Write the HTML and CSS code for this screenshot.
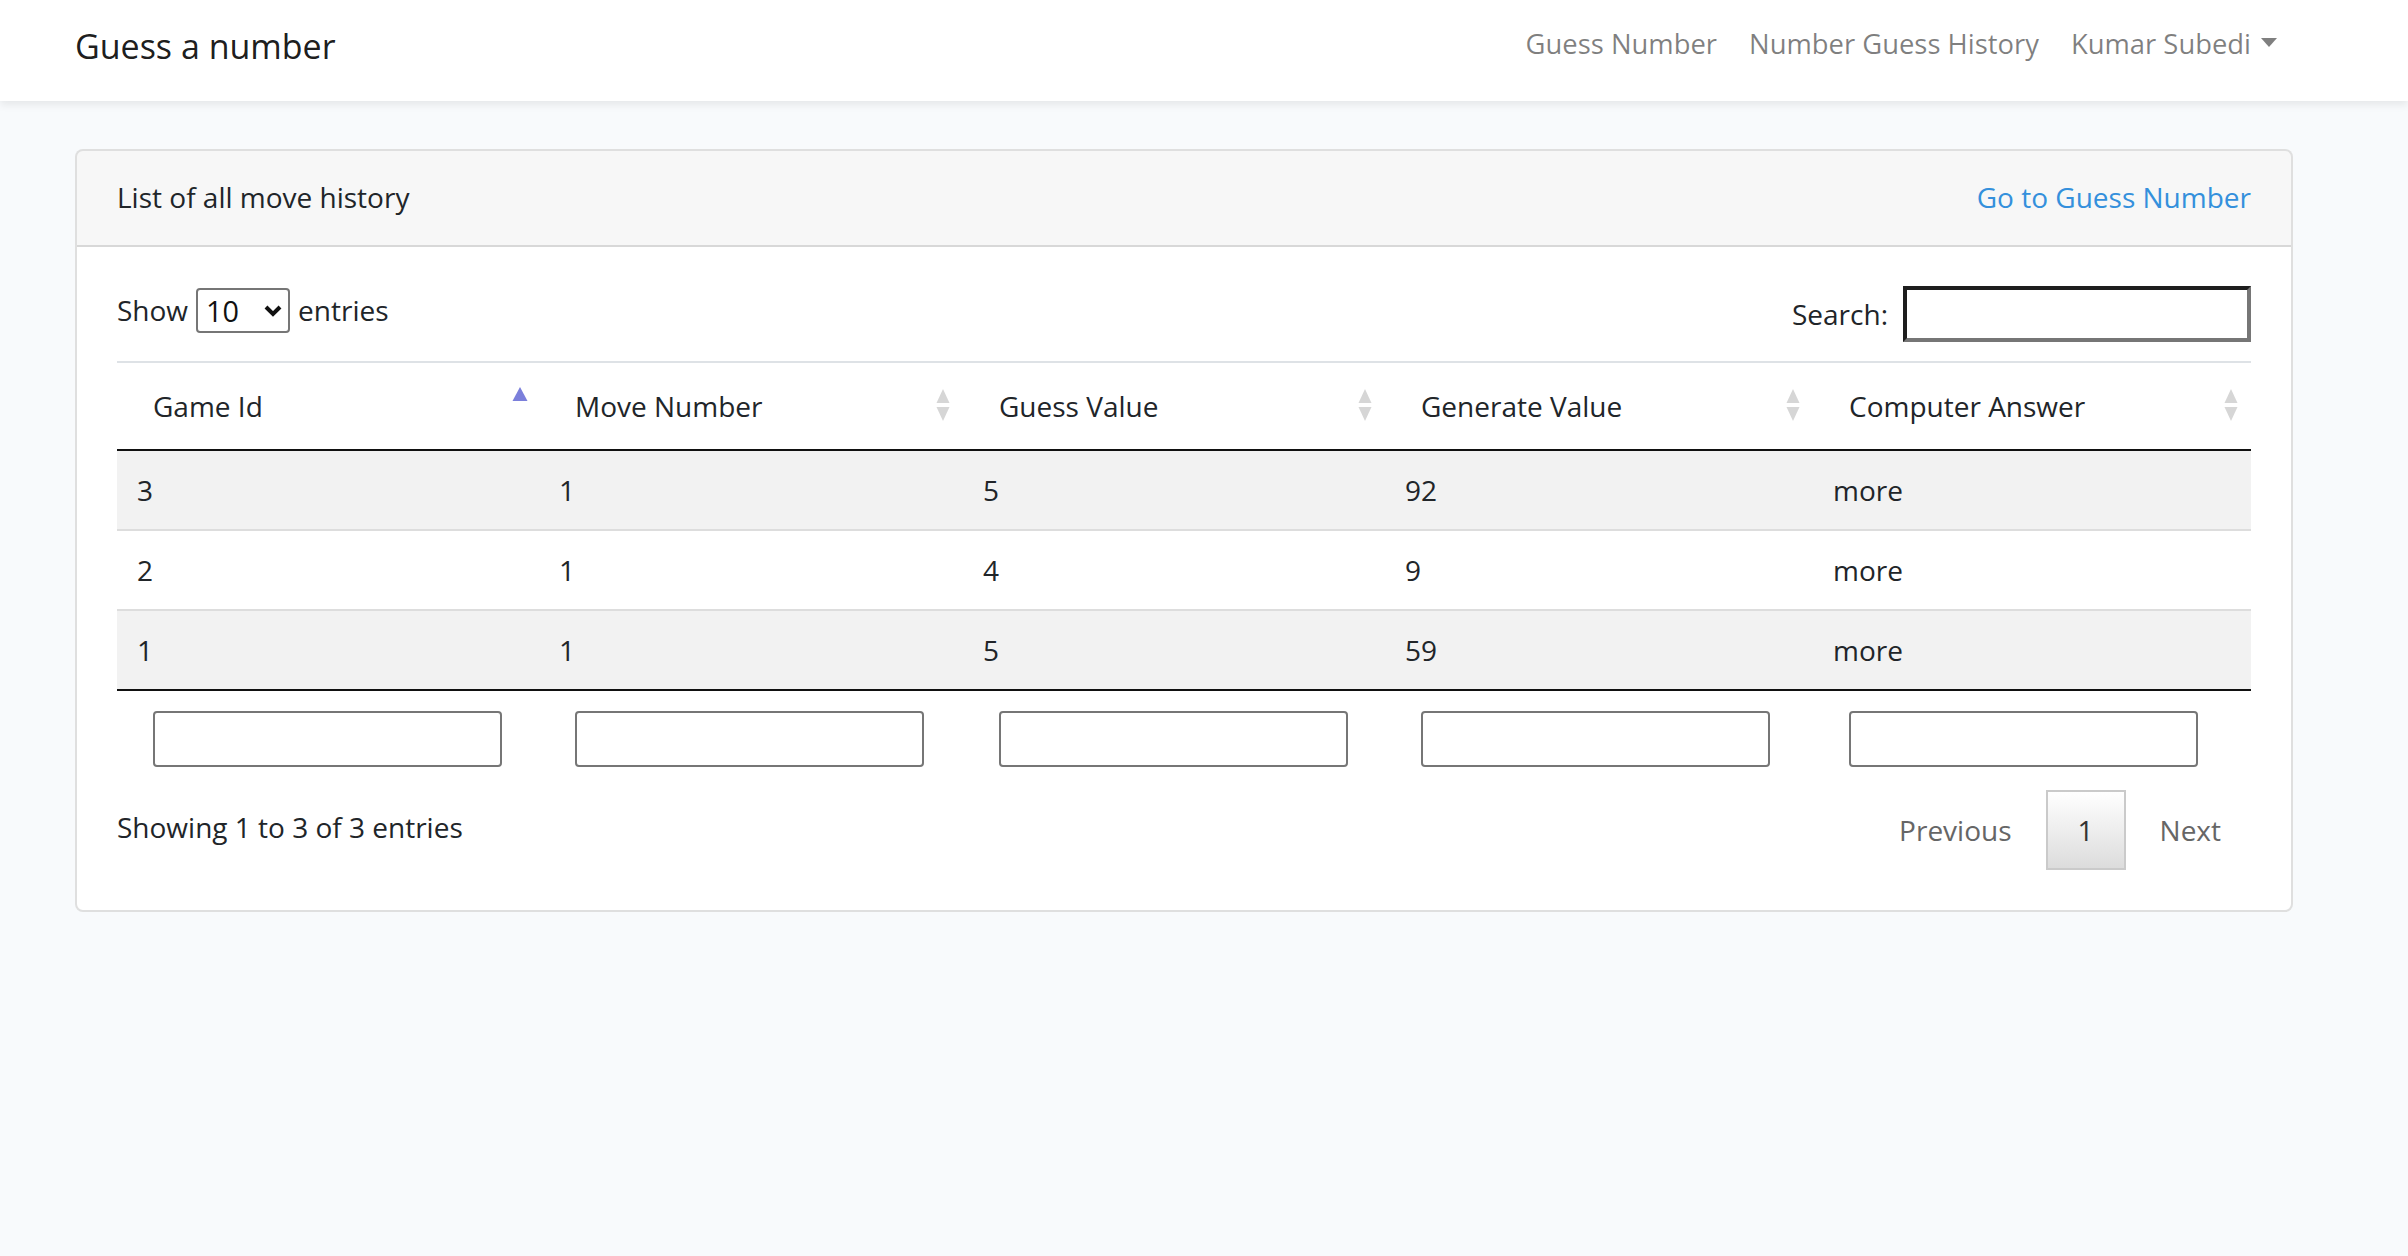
FILE: index.html
```html
<!DOCTYPE html>
<html lang="en">
<head>
<meta charset="utf-8">
<title>Guess a number</title>
<link rel="stylesheet" href="styles.css">
</head>
<body>
<nav class="navbar">
  <a class="brand" href="#">Guess a number</a>
  <ul class="nav">
    <li><a class="nav-link" href="#">Guess Number</a></li>
    <li><a class="nav-link" href="#">Number Guess History</a></li>
    <li><a class="nav-link dropdown-toggle" href="#">Kumar Subedi</a></li>
  </ul>
</nav>

<main class="main">
  <div class="card">
    <div class="card-header">
      <span>List of all move history</span>
      <a class="link" href="#">Go to Guess Number</a>
    </div>
    <div class="card-body">
      <div class="dt-top">
        <label class="dt-length">Show
          <span class="select-wrap">
            <select class="dt-select">
              <option>10</option>
              <option>25</option>
              <option>50</option>
              <option>100</option>
            </select>
            <svg class="chev" width="18" height="12" viewBox="0 0 18 12"><path d="M2 2 L9 9 L16 2" fill="none" stroke="#111" stroke-width="4"/></svg>
          </span>
          entries</label>
        <label class="dt-filter">Search:<input class="search-input" type="search"></label>
      </div>

      <table class="dt-table">
        <colgroup>
          <col class="c1"><col class="c2"><col class="c3"><col class="c4"><col class="c5">
        </colgroup>
        <thead>
          <tr>
            <th>Game Id
              <svg class="sort asc" width="18" height="32" viewBox="0 0 18 32"><polygon points="9,1 16.5,15 1.5,15" fill="#7b7fdb"/></svg>
            </th>
            <th>Move Number
              <svg class="sort" width="16" height="32" viewBox="0 0 16 32"><polygon points="8,0 14.5,14 1.5,14" fill="#d6d6d6"/><polygon points="1.5,18 14.5,18 8,32" fill="#d6d6d6"/></svg>
            </th>
            <th>Guess Value
              <svg class="sort" width="16" height="32" viewBox="0 0 16 32"><polygon points="8,0 14.5,14 1.5,14" fill="#d6d6d6"/><polygon points="1.5,18 14.5,18 8,32" fill="#d6d6d6"/></svg>
            </th>
            <th>Generate Value
              <svg class="sort" width="16" height="32" viewBox="0 0 16 32"><polygon points="8,0 14.5,14 1.5,14" fill="#d6d6d6"/><polygon points="1.5,18 14.5,18 8,32" fill="#d6d6d6"/></svg>
            </th>
            <th>Computer Answer
              <svg class="sort" width="16" height="32" viewBox="0 0 16 32"><polygon points="8,0 14.5,14 1.5,14" fill="#d6d6d6"/><polygon points="1.5,18 14.5,18 8,32" fill="#d6d6d6"/></svg>
            </th>
          </tr>
        </thead>
        <tbody>
          <tr class="odd"><td>3</td><td>1</td><td>5</td><td>92</td><td>more</td></tr>
          <tr class="even"><td>2</td><td>1</td><td>4</td><td>9</td><td>more</td></tr>
          <tr class="odd"><td>1</td><td>1</td><td>5</td><td>59</td><td>more</td></tr>
        </tbody>
        <tfoot>
          <tr>
            <th><input class="col-input" type="text"></th>
            <th><input class="col-input" type="text"></th>
            <th><input class="col-input" type="text"></th>
            <th><input class="col-input" type="text"></th>
            <th><input class="col-input" type="text"></th>
          </tr>
        </tfoot>
      </table>

      <div class="dt-bottom">
        <div class="dt-info">Showing 1 to 3 of 3 entries</div>
        <div class="dt-paginate">
          <a class="page-btn disabled" href="#">Previous</a>
          <a class="page-btn current" href="#">1</a>
          <a class="page-btn disabled" href="#">Next</a>
        </div>
      </div>
    </div>
  </div>
</main>
</body>
</html>
```

FILE: styles.css
```css
* { box-sizing: border-box; }

html, body {
  margin: 0;
  padding: 0;
}

body {
  background: #f8fafc;
  color: #212529;
  font-family: "Open Sans", "Liberation Sans", sans-serif;
  font-size: 28px;
  line-height: 46px;
  width: 2408px;
  height: 1256px;
}

a { text-decoration: none; }

/* Navbar */
.navbar {
  height: 101px;
  background: #fff;
  box-shadow: 0 4px 8px rgba(0, 0, 0, 0.075);
  display: flex;
  align-items: center;
  justify-content: space-between;
  padding: 0 115px 0 75px;
}

.brand {
  color: rgba(0, 0, 0, 0.9);
  font-size: 34px;
  line-height: 56px;
  padding-bottom: 10px;
}

.nav {
  list-style: none;
  margin: 0;
  padding: 0 0 14px 0;
  display: flex;
  font-size: 27.4px;
}

.nav-link {
  display: block;
  color: rgba(0, 0, 0, 0.5);
  padding: 0 16px;
}

.dropdown-toggle::after {
  content: "";
  display: inline-block;
  margin-left: 10px;
  vertical-align: 7px;
  border-top: 9px solid;
  border-left: 8px solid transparent;
  border-right: 8px solid transparent;
  border-bottom: 0;
}

/* Card */
.main {
  padding: 48px 115px 0 75px;
}

.card {
  background: #fff;
  border: 2px solid rgba(0, 0, 0, 0.125);
  border-radius: 8px;
  overflow: hidden;
}

.card-header {
  display: flex;
  justify-content: space-between;
  padding: 23px 40px 25px;
  background: rgba(0, 0, 0, 0.03);
  border-bottom: 2px solid rgba(0, 0, 0, 0.125);
}

.link { color: #3490dc; }

.card-body {
  padding: 39px 40px 40px;
}

/* DataTables top controls */
.dt-top {
  display: flex;
  justify-content: space-between;
  align-items: flex-start;
  height: 56px;
}

.dt-length {
  display: flex;
  align-items: center;
  margin-top: 1px;
}

.select-wrap {
  position: relative;
  display: inline-block;
  margin: 0 8px 0 8px;
  height: 45px;
}

.dt-select {
  appearance: none;
  -webkit-appearance: none;
  width: 94px;
  height: 45px;
  border: 2px solid #767676;
  border-radius: 4px;
  background: #fff;
  color: #111;
  font-family: "Open Sans", "Liberation Sans", sans-serif;
  font-size: 28.8px;
  padding: 0 0 0 8px;
  line-height: 41px;
}

.chev {
  position: absolute;
  right: 8px;
  top: 17px;
  pointer-events: none;
}

.dt-filter {
  display: flex;
  align-items: center;
}

.search-input {
  width: 348px;
  height: 56px;
  margin-left: 15px;
  border-style: solid;
  border-width: 4px;
  border-color: #1e1e1e #767676 #767676 #1e1e1e;
  background: #fff;
  font-size: 28px;
}

/* Table */
.dt-table {
  width: 2134px;
  margin-top: 19px;
  border-collapse: separate;
  border-spacing: 0;
  table-layout: fixed;
}

.c1 { width: 422px; }
.c2 { width: 424px; }
.c3 { width: 422px; }
.c4 { width: 428px; }
.c5 { width: 438px; }

.dt-table thead th {
  position: relative;
  text-align: left;
  font-weight: 400;
  padding: 20px 36px;
  border-top: 2px solid #dee2e6;
  border-bottom: 2px solid #111;
  white-space: nowrap;
}

.sort {
  position: absolute;
  right: 12px;
  top: 26px;
}

.sort.asc {
  right: 10px;
  top: 23px;
}

.dt-table tbody td {
  padding: 16px 20px;
}

.dt-table tbody tr + tr td {
  border-top: 2px solid #ddd;
}

.dt-table tbody tr.odd td {
  background: #f2f2f2;
}

.dt-table tfoot th {
  padding: 20px 36px 12px;
  border-top: 2px solid #111;
  font-weight: 400;
  text-align: left;
}

.col-input {
  display: block;
  width: 349px;
  height: 56px;
  border: 2px solid #767676;
  border-radius: 4px;
  background: #fff;
  font-size: 28px;
}

/* Bottom */
.dt-bottom {
  display: flex;
  justify-content: space-between;
  align-items: flex-start;
}

.dt-info {
  padding-top: 25px;
}

.dt-paginate {
  display: flex;
  padding-top: 11px;
}

.page-btn {
  display: block;
  padding: 15px 28px;
  border: 2px solid transparent;
  border-radius: 4px;
  margin-left: 4px;
  color: #666;
  line-height: 46px;
}

.page-btn.current {
  color: #333;
  border-color: #cacaca;
  border-radius: 0;
  background: linear-gradient(to bottom, #fff 0%, #dcdcdc 100%);
  padding: 15px 30px;
}
```
